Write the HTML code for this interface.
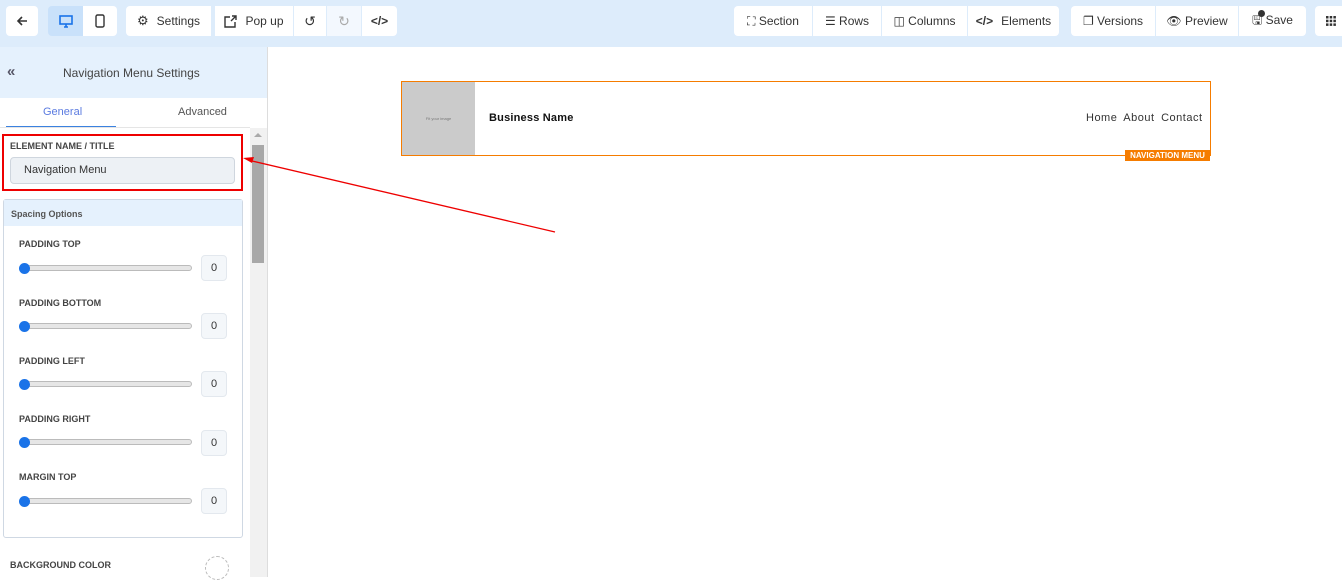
<!DOCTYPE html>
<html><head><style>
*{box-sizing:border-box;margin:0;padding:0}
body{width:1342px;height:577px;overflow:hidden;background:#fff;font-family:"Liberation Sans",Arial,sans-serif;position:relative;color:#333}
.top{position:absolute;left:0;top:0;width:1342px;height:47px;background:#ddecfb}
.btn{position:absolute;top:6px;height:30px;background:#fff;font-size:12px;color:#333;display:flex;align-items:center;justify-content:center;gap:8px}
.sep{border-left:1px solid #ddecfb}
.abs{position:absolute}
.lbl{position:absolute;left:19px;font-size:9px;font-weight:bold;color:#444}
.track{position:absolute;left:20px;width:172px;height:6px;border-radius:3px;background:#e6e6e6;border:1px solid #bbb}
.knob{position:absolute;left:19px;width:11px;height:11px;border-radius:50%;background:#1a73e8}
.num{position:absolute;left:201px;width:26px;height:26px;border:1px solid #e3e8ee;border-radius:4px;background:#f4f7fa;font-size:11px;display:flex;align-items:center;justify-content:center}
</style></head><body>
<div class="top">
<div class="btn" style="left:6px;width:32px;border-radius:4px">
<svg width="12" height="12" viewBox="0 0 12 12"><path d="M11 6H2M6 2L2 6l4 4" stroke="#333" stroke-width="1.6" fill="none"/></svg></div>
<div class="btn" style="left:48px;width:35px;background:#c9e1fa;border-radius:4px 0 0 4px">
<svg width="14" height="13" viewBox="0 0 14 13"><rect x="1" y="1" width="12" height="8" fill="none" stroke="#1a73e8" stroke-width="1.6"/><path d="M5 12h4M7 9v3" stroke="#1a73e8" stroke-width="1.6"/></svg></div>
<div class="btn" style="left:83px;width:34px;border-radius:0 4px 4px 0"><svg width="10" height="14" viewBox="0 0 10 14"><rect x="1" y="1" width="8" height="12" rx="1.5" fill="none" stroke="#333" stroke-width="1.4"/></svg></div>
<div class="btn" style="left:126px;width:85px;border-radius:4px 0 0 4px"><span style="font-size:13px">⚙</span>Settings</div>
<div class="btn" style="left:215px;width:78px"><svg width="13" height="13" viewBox="0 0 13 13"><path d="M6 2H1v10h10V7M7 6l5-5M8 1h4v4" stroke="#333" stroke-width="1.4" fill="none"/></svg>Pop up</div>
<div class="btn sep" style="left:293px;width:33px"><span style="font-size:14px">↺</span></div>
<div class="btn sep" style="left:326px;width:35px;background:#f3f8fe;color:#aaa"><span style="font-size:14px">↻</span></div>
<div class="btn sep" style="left:361px;width:36px;border-radius:0 4px 4px 0;font-weight:bold">&lt;/&gt;</div>
<div class="btn" style="left:734px;width:78px;border-radius:4px 0 0 4px">⛶ Section</div>
<div class="btn sep" style="left:812px;width:69px">☰ Rows</div>
<div class="btn sep" style="left:881px;width:86px">◫ Columns</div>
<div class="btn sep" style="left:967px;width:92px;border-radius:0 4px 4px 0"><b>&lt;/&gt;</b> Elements</div>
<div class="btn" style="left:1071px;width:84px;border-radius:4px 0 0 4px">❐ Versions</div>
<div class="btn sep" style="left:1155px;width:83px">👁 Preview</div>
<div class="btn sep" style="left:1238px;width:68px;border-radius:0 4px 4px 0">🖫 Save<span class="abs" style="left:19px;top:4px;width:7px;height:7px;border-radius:50%;background:#333"></span></div>
<div class="btn" style="left:1315px;width:40px;border-radius:4px;justify-content:flex-start;padding-left:11px"><svg width="10" height="10"><g fill="#333"><rect x="0" y="0" width="2.5" height="2.5"/><rect x="3.7" y="0" width="2.5" height="2.5"/><rect x="7.4" y="0" width="2.5" height="2.5"/><rect x="0" y="3.7" width="2.5" height="2.5"/><rect x="3.7" y="3.7" width="2.5" height="2.5"/><rect x="7.4" y="3.7" width="2.5" height="2.5"/><rect x="0" y="7.4" width="2.5" height="2.5"/><rect x="3.7" y="7.4" width="2.5" height="2.5"/><rect x="7.4" y="7.4" width="2.5" height="2.5"/></g></svg></div>
</div>

<div class="abs" style="left:0;top:47px;width:268px;height:530px;border-right:1px solid #ddd"></div>
<div class="abs" style="left:0;top:47px;width:267px;height:51px;background:#e5f1fd"></div>
<div class="abs" style="left:7px;top:63px;font-size:15px;font-weight:bold;color:#556">«</div>
<div class="abs" style="left:63px;top:66px;font-size:12px;color:#444">Navigation Menu Settings</div>
<div class="abs" style="left:43px;top:106px;font-size:11px;color:#5b7be0">General</div>
<div class="abs" style="left:178px;top:106px;font-size:11px;color:#555">Advanced</div>
<div class="abs" style="left:6px;top:126px;width:110px;height:2px;background:#3b82e0"></div>
<div class="abs" style="left:0;top:127px;width:250px;height:1px;background:#e5e5e5"></div>
<div class="abs" style="left:250px;top:128px;width:17px;height:449px;background:#f1f1f1"></div>
<div class="abs" style="left:252px;top:145px;width:12px;height:118px;background:#a8a8a8"></div>
<div class="abs" style="left:254px;top:133px;width:0;height:0;border:4px solid transparent;border-bottom:4px solid #aaa;border-top:0"></div>

<div class="abs" style="left:2px;top:134px;width:241px;height:57px;border:2px solid #e00"></div>
<div class="abs" style="left:10px;top:141px;font-size:9px;font-weight:bold;color:#444">ELEMENT NAME / TITLE</div>
<div class="abs" style="left:10px;top:157px;width:225px;height:27px;background:#edf1f5;border:1px solid #cfd6de;border-radius:4px;font-size:11px;color:#333;padding:6px 0 0 13px">Navigation Menu</div>

<div class="abs" style="left:3px;top:199px;width:240px;height:339px;border:1px solid #cfd8e3;border-radius:3px"></div>
<div class="abs" style="left:4px;top:200px;width:238px;height:26px;background:#e5f1fd"></div>
<div class="abs" style="left:11px;top:209px;font-size:9px;font-weight:bold;color:#555">Spacing Options</div>

<div class="lbl" style="top:239px">PADDING TOP</div><div class="track" style="top:265px"></div><div class="knob" style="top:263px"></div><div class="num" style="top:255px">0</div>
<div class="lbl" style="top:298px">PADDING BOTTOM</div><div class="track" style="top:323px"></div><div class="knob" style="top:321px"></div><div class="num" style="top:313px">0</div>
<div class="lbl" style="top:356px">PADDING LEFT</div><div class="track" style="top:381px"></div><div class="knob" style="top:379px"></div><div class="num" style="top:371px">0</div>
<div class="lbl" style="top:414px">PADDING RIGHT</div><div class="track" style="top:439px"></div><div class="knob" style="top:437px"></div><div class="num" style="top:430px">0</div>
<div class="lbl" style="top:472px">MARGIN TOP</div><div class="track" style="top:498px"></div><div class="knob" style="top:496px"></div><div class="num" style="top:488px">0</div>

<div class="abs" style="left:10px;top:560px;font-size:9px;font-weight:bold;color:#444">BACKGROUND COLOR</div>
<div class="abs" style="left:205px;top:556px;width:24px;height:24px;border-radius:50%;border:1px dashed #bbb"></div>

<div class="abs" style="left:401px;top:81px;width:810px;height:75px;border:1px solid #f57c00"></div>
<div class="abs" style="left:402px;top:82px;width:73px;height:73px;background:#cbcbcb;font-size:4px;color:#777;display:flex;align-items:center;justify-content:center">Fit your image</div>
<div class="abs" style="left:489px;top:112px;font-size:11px;font-weight:bold;color:#111;letter-spacing:0.2px">Business Name</div>
<div class="abs" style="left:1086px;top:112px;font-size:11px;color:#333;word-spacing:3px;letter-spacing:0.5px">Home About Contact</div>
<div class="abs" style="left:1125px;top:150px;width:85px;height:11px;background:#f57c00;color:#fff;font-size:8px;font-weight:bold;text-align:center;line-height:11px">NAVIGATION MENU</div>

<svg class="abs" style="left:0;top:0" width="1342" height="577"><path d="M555 232L252 161" stroke="#e00" stroke-width="1.3"/><path d="M243 158l11-1-2 6z" fill="#e00"/></svg>
</body></html>
